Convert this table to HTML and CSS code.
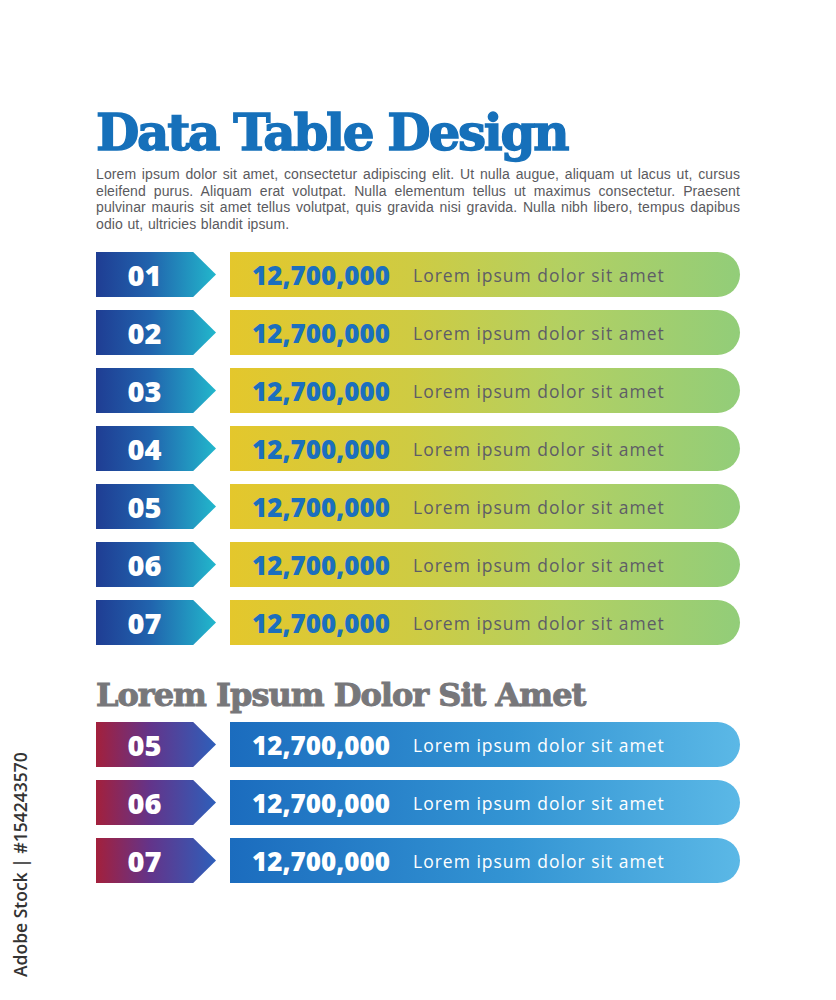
FILE: index.html
```html
<!DOCTYPE html>
<html lang="en">
<head>
<meta charset="utf-8">
<title>Data Table Design</title>
<link rel="stylesheet" href="styles.css">
</head>
<body>
<div class="page">
  <h1 class="title">Data Table Design</h1>
  <p class="intro">Lorem ipsum dolor sit amet, consectetur adipiscing elit. Ut nulla augue, aliquam ut lacus ut, cursus eleifend purus. Aliquam erat volutpat. Nulla elementum tellus ut maximus consectetur. Praesent pulvinar mauris sit amet tellus volutpat, quis gravida nisi gravida. Nulla nibh libero, tempus dapibus odio ut, ultricies blandit ipsum.</p>

  <div class="rows">
    <div class="row"><div class="badge">01</div><div class="bar"><span class="value">12,700,000</span><span class="label">Lorem ipsum dolor sit amet</span></div></div>
    <div class="row"><div class="badge">02</div><div class="bar"><span class="value">12,700,000</span><span class="label">Lorem ipsum dolor sit amet</span></div></div>
    <div class="row"><div class="badge">03</div><div class="bar"><span class="value">12,700,000</span><span class="label">Lorem ipsum dolor sit amet</span></div></div>
    <div class="row"><div class="badge">04</div><div class="bar"><span class="value">12,700,000</span><span class="label">Lorem ipsum dolor sit amet</span></div></div>
    <div class="row"><div class="badge">05</div><div class="bar"><span class="value">12,700,000</span><span class="label">Lorem ipsum dolor sit amet</span></div></div>
    <div class="row"><div class="badge">06</div><div class="bar"><span class="value">12,700,000</span><span class="label">Lorem ipsum dolor sit amet</span></div></div>
    <div class="row"><div class="badge">07</div><div class="bar"><span class="value">12,700,000</span><span class="label">Lorem ipsum dolor sit amet</span></div></div>
  </div>

  <h2 class="subtitle">Lorem Ipsum Dolor Sit Amet</h2>

  <div class="rows alt">
    <div class="row"><div class="badge">05</div><div class="bar"><span class="value">12,700,000</span><span class="label">Lorem ipsum dolor sit amet</span></div></div>
    <div class="row"><div class="badge">06</div><div class="bar"><span class="value">12,700,000</span><span class="label">Lorem ipsum dolor sit amet</span></div></div>
    <div class="row"><div class="badge">07</div><div class="bar"><span class="value">12,700,000</span><span class="label">Lorem ipsum dolor sit amet</span></div></div>
  </div>
</div>
<div class="watermark">Adobe Stock | #154243570</div>
</body>
</html>
```

FILE: styles.css
```css
html, body {
  margin: 0;
  padding: 0;
  background: #ffffff;
}

.page {
  width: 644px;
  padding: 103px 96px 0 96px;
}

.title {
  margin: 0;
  font-family: "DejaVu Serif", serif;
  font-weight: bold;
  font-size: 50px;
  line-height: 60px;
  letter-spacing: -2.3px;
  -webkit-text-stroke: 1.4px #1670ba;
  color: #1670ba;
}

.intro {
  margin: 3px 0 0 0;
  font-family: "Liberation Sans", Arial, sans-serif;
  font-size: 14px;
  line-height: 16.5px;
  letter-spacing: 0.1px;
  word-spacing: 0.6px;
  color: #5a5a5e;
  text-align: justify;
}

.rows {
  display: flex;
  flex-direction: column;
  gap: 13px;
  margin-top: 20px;
}

.row {
  display: flex;
  gap: 14px;
  height: 45px;
}

.badge {
  width: 120px;
  flex: none;
  box-sizing: border-box;
  padding-right: 23px;
  display: flex;
  align-items: center;
  justify-content: center;
  clip-path: polygon(0 0, 81% 0, 100% 50%, 81% 100%, 0 100%);
  background: linear-gradient(90deg, #1f3d93 0%, #2163ad 45%, #22b7cc 100%);
  font-family: "Open Sans", sans-serif;
  font-weight: 800;
  font-size: 29px;
  color: #ffffff;
}

.bar {
  flex: 1;
  display: flex;
  align-items: center;
  padding-left: 22px;
  border-radius: 0 23px 23px 0;
  background: linear-gradient(90deg, #e4c72c 0%, #cfcb42 35%, #b3d062 65%, #92cd79 100%);
}

.value {
  width: 161px;
  flex: none;
  font-family: "Open Sans", sans-serif;
  font-weight: 800;
  font-size: 26px;
  color: #1b6fbe;
}

.label {
  font-family: "Open Sans", sans-serif;
  font-size: 17.5px;
  letter-spacing: 1px;
  color: #5e5d66;
}

.subtitle {
  margin: 31px 0 0 0;
  font-family: "DejaVu Serif", serif;
  font-weight: bold;
  font-size: 32px;
  line-height: 38px;
  letter-spacing: -1px;
  -webkit-text-stroke: 1px #77777a;
  color: #77777a;
}

.rows.alt {
  margin-top: 8px;
}

.alt .badge {
  background: linear-gradient(90deg, #a3203c 0%, #63348a 45%, #2e5fba 100%);
}

.alt .bar {
  background: linear-gradient(90deg, #1b6cbe 0%, #3394d3 55%, #5bb8e6 100%);
}

.alt .value {
  color: #ffffff;
}

.alt .label {
  color: #ffffff;
}

.watermark {
  position: absolute;
  left: 8px;
  top: 977px;
  transform: rotate(-90deg);
  transform-origin: 0 0;
  white-space: nowrap;
  font-family: "Open Sans", sans-serif;
  font-size: 17.5px;
  font-weight: 600;
  color: #333333;
}
```
